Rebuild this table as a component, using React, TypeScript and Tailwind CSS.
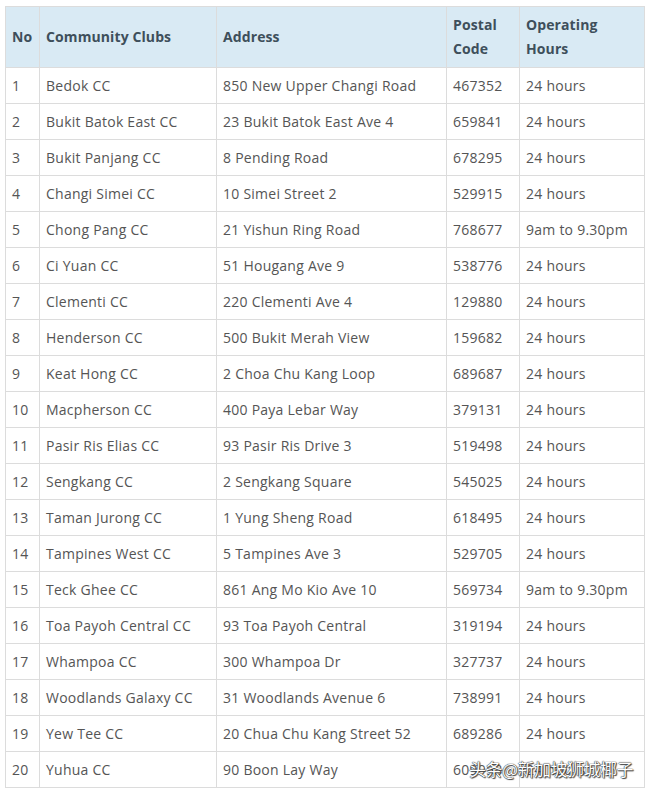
const rows: [string, string, string, string][] = [
  ["Bedok CC", "850 New Upper Changi Road", "467352", "24 hours"],
  ["Bukit Batok East CC", "23 Bukit Batok East Ave 4", "659841", "24 hours"],
  ["Bukit Panjang CC", "8 Pending Road", "678295", "24 hours"],
  ["Changi Simei CC", "10 Simei Street 2", "529915", "24 hours"],
  ["Chong Pang CC", "21 Yishun Ring Road", "768677", "9am to 9.30pm"],
  ["Ci Yuan CC", "51 Hougang Ave 9", "538776", "24 hours"],
  ["Clementi CC", "220 Clementi Ave 4", "129880", "24 hours"],
  ["Henderson CC", "500 Bukit Merah View", "159682", "24 hours"],
  ["Keat Hong CC", "2 Choa Chu Kang Loop", "689687", "24 hours"],
  ["Macpherson CC", "400 Paya Lebar Way", "379131", "24 hours"],
  ["Pasir Ris Elias CC", "93 Pasir Ris Drive 3", "519498", "24 hours"],
  ["Sengkang CC", "2 Sengkang Square", "545025", "24 hours"],
  ["Taman Jurong CC", "1 Yung Sheng Road", "618495", "24 hours"],
  ["Tampines West CC", "5 Tampines Ave 3", "529705", "24 hours"],
  ["Teck Ghee CC", "861 Ang Mo Kio Ave 10", "569734", "9am to 9.30pm"],
  ["Toa Payoh Central CC", "93 Toa Payoh Central", "319194", "24 hours"],
  ["Whampoa CC", "300 Whampoa Dr", "327737", "24 hours"],
  ["Woodlands Galaxy CC", "31 Woodlands Avenue 6", "738991", "24 hours"],
  ["Yew Tee CC", "20 Chua Chu Kang Street 52", "689286", "24 hours"],
  ["Yuhua CC", "90 Boon Lay Way", "609958", "24 hours"],
]

const th = "border border-[#dcdcdc] px-[6px] py-[6px] text-left align-middle font-bold text-[#3e4f5b] leading-[24px] tracking-[0.1px]"
const td = "border border-[#dcdcdc] px-[6px] align-middle text-[#555555] leading-[20px] tracking-[0.25px]"

export default function App() {
  return (
    <div className="min-h-screen bg-white pt-[6px] pl-[5px] relative" style={{ fontFamily: '"Open Sans", "Liberation Sans", sans-serif' }}>
      <table className="border-collapse text-[14px] table-fixed w-[639px]">
        <colgroup>
          <col className="w-[34px]" />
          <col className="w-[177px]" />
          <col className="w-[230px]" />
          <col className="w-[73px]" />
          <col className="w-[125px]" />
        </colgroup>
        <thead>
          <tr className="bg-[#d9eaf4] h-[61px]">
            <th className={th}>No</th>
            <th className={th}>Community Clubs</th>
            <th className={th}>Address</th>
            <th className={th}>Postal<br />Code</th>
            <th className={th}>Operating<br />Hours</th>
          </tr>
        </thead>
        <tbody>
          {rows.map((r, i) => (
            <tr key={i} className="h-[36px]">
              <td className={td}>{i + 1}</td>
              <td className={td}>{r[0]}</td>
              <td className={td}>{r[1]}</td>
              <td className={td}>{r[2]}</td>
              <td className={td}>{r[3]}</td>
            </tr>
          ))}
        </tbody>
      </table>
      <div
        className="absolute left-[469px] top-[756px] text-[17px] text-white tracking-[-0.5px]"
        style={{
          fontFamily: '"Noto Sans CJK SC", sans-serif',
          textShadow: '0 0 1px #222, 0 0 1px #222, 1px 1px 1px #444',
        }}
      >
        头条@新加坡狮城椰子
      </div>
    </div>
  )
}
